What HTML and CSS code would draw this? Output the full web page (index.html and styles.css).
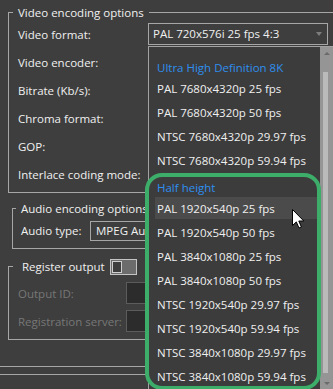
FILE: index.html
```html
<!DOCTYPE html>
<html lang="en">
<head>
    <meta charset="UTF-8">
    <meta name="viewport" content="width=device-width, initial-scale=1.0">
    <title>Output settings</title>
    <link rel="stylesheet" href="styles.css">
</head>
<body>
    <fieldset class="group video">
        <legend>Video encoding options</legend>
        <div class="fields">
            <div class="row"><label>Video format:</label><div class="combo">PAL 720x576i 25 fps 4:3<span class="combo-arrow"></span></div></div>
            <div class="row"><label>Video encoder:</label><div class="combo"></div></div>
            <div class="row"><label>Bitrate (Kb/s):</label><div class="combo"></div></div>
            <div class="row"><label>Chroma format:</label><div class="combo"></div></div>
            <div class="row"><label>GOP:</label><div class="combo"></div></div>
            <div class="row"><label>Interlace coding mode:</label><div class="combo"></div></div>
        </div>
    </fieldset>

    <fieldset class="group audio">
        <legend>Audio encoding options</legend>
        <div class="fields">
            <div class="row"><label>Audio type:</label><div class="combo">MPEG Audio</div></div>
        </div>
    </fieldset>

    <fieldset class="group register">
        <legend>Register output <span class="toggle"><span class="toggle-knob"></span></span></legend>
        <div class="fields">
            <div class="row"><label>Output ID:</label><div class="field-input"></div></div>
            <div class="row"><label>Registration server:</label><div class="field-input"></div></div>
        </div>
    </fieldset>

    <div class="rule first"></div>
    <div class="rule"></div>

    <!-- open dropdown of the video format combo -->
    <div class="popup">
        <div class="popup-list">
            <div class="option heading">Ultra High Definition 8K</div>
            <div class="option">PAL 7680x4320p 25 fps</div>
            <div class="option">PAL 7680x4320p 50 fps</div>
            <div class="option">NTSC 7680x4320p 29.97 fps</div>
            <div class="option">NTSC 7680x4320p 59.94 fps</div>
            <div class="option heading">Half height</div>
            <div class="option hover">PAL 1920x540p 25 fps</div>
            <div class="option">PAL 1920x540p 50 fps</div>
            <div class="option">PAL 3840x1080p 25 fps</div>
            <div class="option">PAL 3840x1080p 50 fps</div>
            <div class="option">NTSC 1920x540p 29.97 fps</div>
            <div class="option">NTSC 1920x540p 59.94 fps</div>
            <div class="option">NTSC 3840x1080p 29.97 fps</div>
            <div class="option">NTSC 3840x1080p 59.94 fps</div>
        </div>
        <div class="scrollbar">
            <div class="scroll-btn"><span class="arrow-up"></span></div>
            <div class="scroll-thumb"></div>
            <div class="scroll-btn"><span class="arrow-down"></span></div>
        </div>
    </div>

    <div class="callout"></div>

    <svg class="cursor" viewBox="0 0 13 20">
        <path d="M0.5 0.5 L0.5 16.5 L4.3 12.9 L7 19 L9.4 18 L6.8 12 L11.8 12 Z" fill="#fff" stroke="#000" stroke-width="1" stroke-linejoin="miter"/>
    </svg>
</body>
</html>
```

FILE: styles.css
```css
html, body {
    margin: 0;
    height: 100%;
    overflow: hidden;
}
body {
    position: relative;
    background: #3e3e3e;
    color: #f0f0f0;
    font-family: "Open Sans", "Noto Sans", sans-serif;
    font-size: 11.5px;
}
.group {
    margin: 0;
    padding: 0;
    min-width: 0;
    border: 1px solid #a6a6a6;
    border-right: none;
}
.group legend {
    height: 17px;
    line-height: 17px;
    padding: 0 5px;
}
.row {
    display: flex;
    align-items: flex-start;
    height: 28px;
}
.row label {
    flex: none;
    line-height: 28px;
    white-space: nowrap;
}
.combo {
    position: relative;
    box-sizing: border-box;
    width: 180px;
    height: 22px;
    margin-top: 2px;
    padding-left: 4px;
    border: 1px solid #a6a6a6;
    line-height: 20px;
    white-space: nowrap;
    overflow: hidden;
}
.combo-arrow {
    position: absolute;
    right: 5px;
    top: 8px;
    border-left: 3px solid transparent;
    border-right: 3px solid transparent;
    border-top: 4px solid #7d7d7d;
}

/* video */
.video {
    margin: 4px 0 0 8px;
    padding-bottom: 3px;
}
.video legend {
    margin-left: 4px;
}
.video .fields {
    padding-left: 9px;
}
.video .row label {
    width: 130px;
}

/* audio */
.audio {
    margin: 7px 0 0 12px;
    padding: 2px 0 5px;
}
.audio legend {
    margin-left: 3px;
}
.audio .fields {
    padding-left: 8px;
}
.audio .row {
    height: 24px;
}
.audio .row label {
    width: 69px;
    line-height: 24px;
}
.audio .combo {
    width: 120px;
    height: 20px;
    line-height: 18px;
    padding-left: 5px;
}

/* register */
.register {
    margin: 9px 0 0 8px;
    padding: 5px 0 3px;
}
.register legend {
    display: flex;
    align-items: center;
    margin-left: 4px;
    padding: 0 8px 0 9px;
}
.register .fields {
    padding-left: 9px;
}
.register .row label {
    width: 108px;
    color: #777;
}
.toggle {
    box-sizing: border-box;
    width: 27px;
    height: 16px;
    margin-left: 5px;
    padding: 1px;
    border: 1px solid #c4c4c4;
    background: #6c6c6c;
}
.toggle-knob {
    display: block;
    box-sizing: border-box;
    width: 10px;
    height: 12px;
    border: 1px solid #cfcfcf;
    background: #3e3e3e;
}
.field-input {
    box-sizing: border-box;
    width: 120px;
    height: 22px;
    margin-top: 2px;
    border: 1px solid #5c5c5c;
    background: #2c2c2c;
}

.rule {
    border-top: 1px solid #a6a6a6;
    margin-top: 7px;
}
.rule.first {
    margin-top: 26px;
}

/* dropdown */
.popup {
    position: absolute;
    left: 148px;
    top: 46px;
    right: -1px;
    bottom: -1px;
    display: flex;
    border: 1px solid #a2a2a2;
    background: #3c3c3c;
}
.popup-list {
    flex: 1;
    overflow: hidden;
    padding-top: 6px;
}
.option {
    height: 24px;
    line-height: 24px;
    margin-left: 6px;
    padding-left: 2px;
    white-space: nowrap;
}
.option.heading {
    height: 18px;
    line-height: 18px;
    padding-top: 6px;
    color: #2e8ff0;
}
.option.hover {
    background: linear-gradient(#4b4b4b, #4b4b4b) top left / 100% 22px no-repeat;
}
.scrollbar {
    flex: none;
    display: flex;
    flex-direction: column;
    width: 13px;
    background: #959595;
}
.scroll-btn {
    display: flex;
    justify-content: center;
    align-items: center;
    height: 12px;
}
.arrow-up {
    border-left: 3px solid transparent;
    border-right: 3px solid transparent;
    border-bottom: 3px solid #6a6a6a;
}
.arrow-down {
    border-left: 3px solid transparent;
    border-right: 3px solid transparent;
    border-top: 3px solid #6a6a6a;
}
.scroll-thumb {
    flex: 1;
    width: 5px;
    margin: 13px 0 4px 3px;
    background: #bababa;
}

.callout {
    position: absolute;
    left: 145px;
    top: 173px;
    box-sizing: border-box;
    width: 176px;
    height: 217px;
    border: 4px solid #3dae6a;
    border-radius: 17px;
    pointer-events: none;
}
.cursor {
    position: absolute;
    left: 292px;
    top: 209px;
    width: 13px;
    height: 20px;
}
```
